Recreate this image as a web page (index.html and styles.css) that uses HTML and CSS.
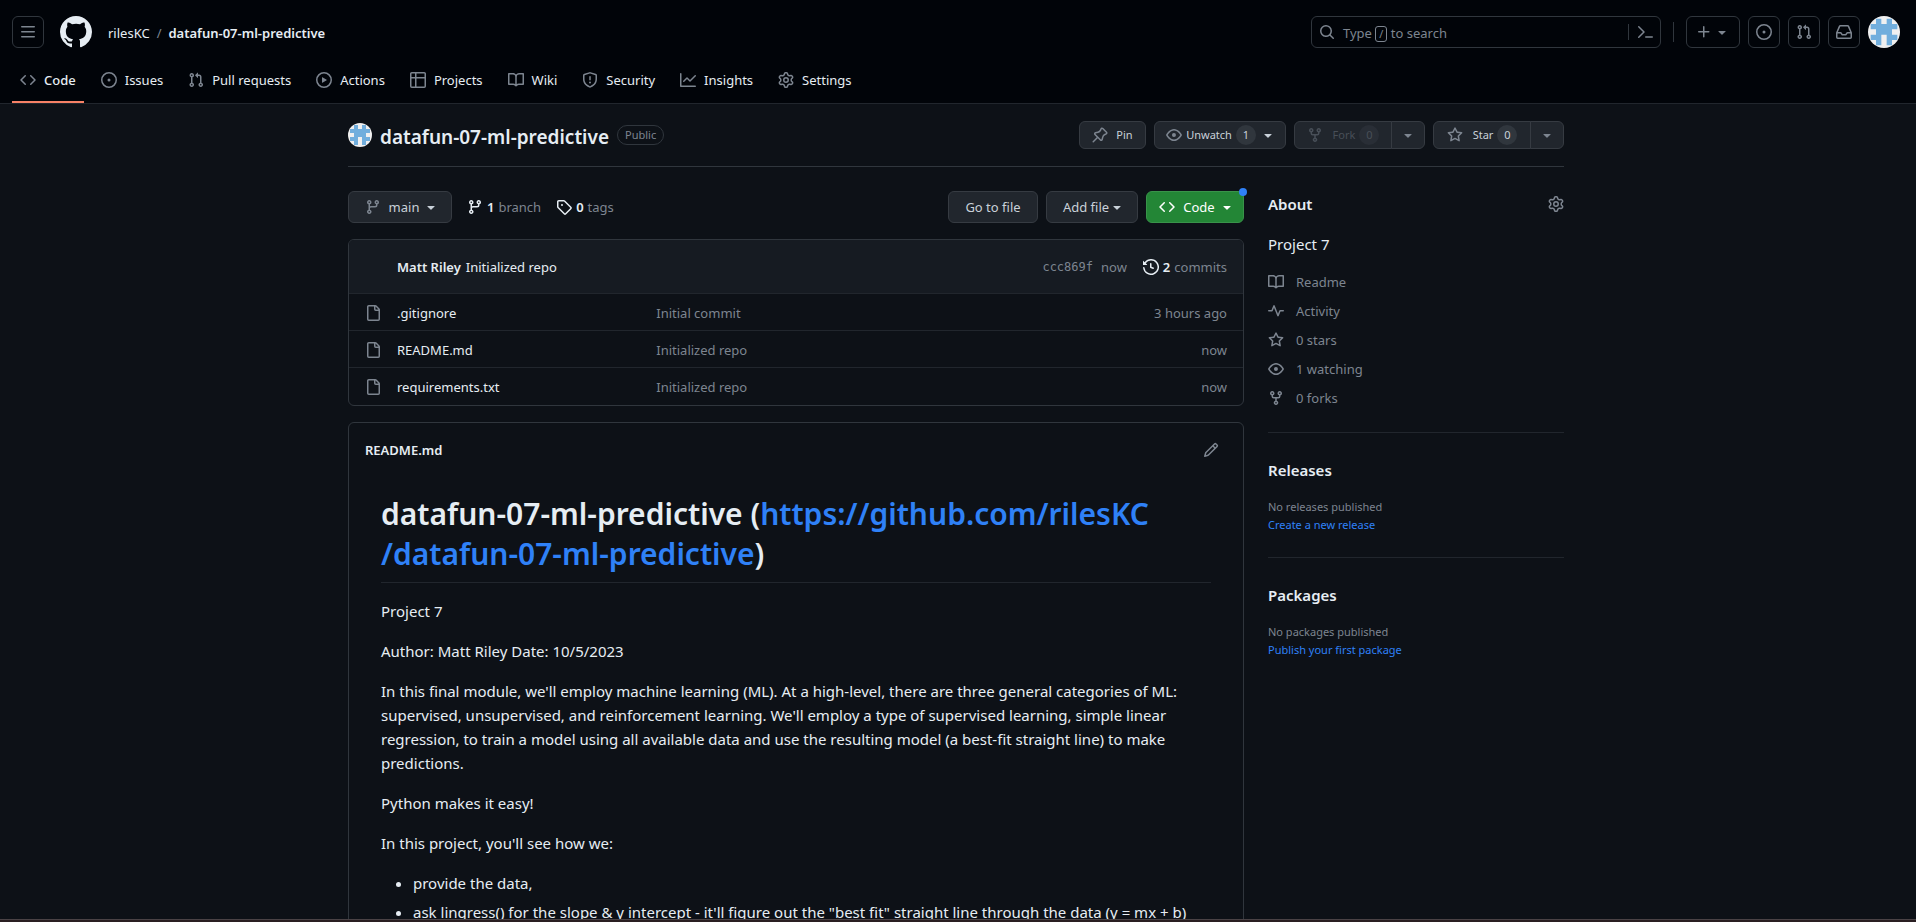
FILE: index.html
```html
<!DOCTYPE html>
<html lang="en">
<head>
<meta charset="utf-8">
<title>rilesKC/datafun-07-ml-predictive</title>
<link rel="stylesheet" href="styles.css">
</head>
<body>
<svg class="sprite" aria-hidden="true">
  <symbol id="i-menu" viewBox="0 0 16 16"><path d="M1 2.75A.75.75 0 0 1 1.75 2h12.5a.75.75 0 0 1 0 1.5H1.75A.75.75 0 0 1 1 2.75Zm0 5A.75.75 0 0 1 1.75 7h12.5a.75.75 0 0 1 0 1.5H1.75A.75.75 0 0 1 1 7.75ZM1.75 12h12.5a.75.75 0 0 1 0 1.5H1.75a.75.75 0 0 1 0-1.5Z"/></symbol>
  <symbol id="i-mark" viewBox="0 0 16 16"><path d="M8 0c4.42 0 8 3.58 8 8a8.013 8.013 0 0 1-5.45 7.59c-.4.08-.55-.17-.55-.38 0-.27.01-1.13.01-2.2 0-.75-.25-1.23-.54-1.48 1.78-.2 3.65-.88 3.65-3.95 0-.88-.31-1.59-.82-2.15.08-.2.36-1.02-.08-2.12 0 0-.67-.22-2.2.82-.64-.18-1.32-.27-2-.27-.68 0-1.36.09-2 .27-1.53-1.03-2.2-.82-2.2-.82-.44 1.1-.16 1.92-.08 2.12-.51.56-.82 1.28-.82 2.15 0 3.06 1.86 3.75 3.64 3.95-.23.2-.44.55-.51 1.07-.46.21-1.61.55-2.33-.66-.15-.24-.6-.83-1.23-.82-.67.01-.27.38.01.53.34.19.73.9.82 1.13.16.45.68 1.31 2.69.94 0 .67.01 1.3.01 1.49 0 .21-.15.45-.55.38A7.995 7.995 0 0 1 0 8c0-4.42 3.58-8 8-8Z"/></symbol>
  <symbol id="i-search" viewBox="0 0 16 16"><path d="M10.68 11.74a6 6 0 0 1-7.922-8.982 6 6 0 0 1 8.982 7.922l3.04 3.04a.749.749 0 0 1-.326 1.275.749.749 0 0 1-.734-.215ZM11.5 7a4.499 4.499 0 1 0-8.997 0A4.499 4.499 0 0 0 11.5 7Z"/></symbol>
  <symbol id="i-command" viewBox="0 0 16 16"><path d="M1.22 2.22a.75.75 0 0 1 1.06 0l5.25 5.25a.75.75 0 0 1 0 1.06l-5.25 5.25a.75.75 0 1 1-1.06-1.06L5.94 8 1.22 3.28a.75.75 0 0 1 0-1.06ZM8.75 12.25h6.5a.75.75 0 0 1 0 1.5h-6.5a.75.75 0 0 1 0-1.5Z"/></symbol>
  <symbol id="i-plus" viewBox="0 0 16 16"><path d="M7.75 2a.75.75 0 0 1 .75.75V7h4.25a.75.75 0 0 1 0 1.5H8.5v4.25a.75.75 0 0 1-1.5 0V8.5H2.75a.75.75 0 0 1 0-1.5H7V2.75A.75.75 0 0 1 7.75 2Z"/></symbol>
  <symbol id="i-caret" viewBox="0 0 16 16"><path d="m4.427 7.427 3.396 3.396a.25.25 0 0 0 .354 0l3.396-3.396A.25.25 0 0 0 11.396 7H4.604a.25.25 0 0 0-.177.427Z"/></symbol>
  <symbol id="i-issue" viewBox="0 0 16 16"><path d="M8 9.5a1.5 1.5 0 1 0 0-3 1.5 1.5 0 0 0 0 3Z"/><path d="M8 0a8 8 0 1 1 0 16A8 8 0 0 1 8 0ZM1.5 8a6.5 6.5 0 1 0 13 0 6.5 6.5 0 0 0-13 0Z"/></symbol>
  <symbol id="i-pr" viewBox="0 0 16 16"><path d="M1.5 3.25a2.25 2.25 0 1 1 3 2.122v5.256a2.251 2.251 0 1 1-1.5 0V5.372A2.25 2.25 0 0 1 1.5 3.25Zm5.677-.177L9.573.677A.25.25 0 0 1 10 .854V2.5h1A2.5 2.5 0 0 1 13.5 5v5.628a2.251 2.251 0 1 1-1.5 0V5a1 1 0 0 0-1-1h-1v1.646a.25.25 0 0 1-.427.177L7.177 3.427a.25.25 0 0 1 0-.354ZM3.75 2.5a.75.75 0 1 0 0 1.5.75.75 0 0 0 0-1.5Zm0 9.5a.75.75 0 1 0 0 1.5.75.75 0 0 0 0-1.5Zm8.25.75a.75.75 0 1 0 1.5 0 .75.75 0 0 0-1.5 0Z"/></symbol>
  <symbol id="i-inbox" viewBox="0 0 16 16"><path d="M2.8 2.06A1.75 1.75 0 0 1 4.41 1h7.18c.7 0 1.333.417 1.61 1.06l2.74 6.395c.04.093.06.194.06.295v4.5A1.75 1.75 0 0 1 14.25 15H1.75A1.75 1.75 0 0 1 0 13.25v-4.5c0-.101.02-.202.06-.295Zm1.61.44a.25.25 0 0 0-.23.152L1.887 8H4.75a.75.75 0 0 1 .6.3L6.625 10h2.75l1.275-1.7a.75.75 0 0 1 .6-.3h2.863L11.82 2.652a.25.25 0 0 0-.23-.152Zm10.09 7h-2.875l-1.275 1.7a.75.75 0 0 1-.6.3h-3.5a.75.75 0 0 1-.6-.3L4.375 9.5H1.5v3.75c0 .138.112.25.25.25h12.5a.25.25 0 0 0 .25-.25Z"/></symbol>
  <symbol id="i-code" viewBox="0 0 16 16"><path d="m11.28 3.22 4.25 4.25a.75.75 0 0 1 0 1.06l-4.25 4.25a.749.749 0 0 1-1.275-.326.749.749 0 0 1 .215-.734L13.94 8l-3.72-3.72a.749.749 0 0 1 .326-1.275.749.749 0 0 1 .734.215Zm-6.56 0a.751.751 0 0 1 1.042.018.751.751 0 0 1 .018 1.042L2.06 8l3.72 3.72a.749.749 0 0 1-.326 1.275.749.749 0 0 1-.734-.215L.47 8.53a.75.75 0 0 1 0-1.06Z"/></symbol>
  <symbol id="i-play" viewBox="0 0 16 16"><path d="M8 0a8 8 0 1 1 0 16A8 8 0 0 1 8 0ZM1.5 8a6.5 6.5 0 1 0 13 0 6.5 6.5 0 0 0-13 0Zm4.879-2.773 4.264 2.559a.25.25 0 0 1 0 .428l-4.264 2.559A.25.25 0 0 1 6 10.559V5.442a.25.25 0 0 1 .379-.215Z"/></symbol>
  <symbol id="i-table" viewBox="0 0 16 16"><path d="M0 1.75C0 .784.784 0 1.75 0h12.5C15.216 0 16 .784 16 1.75v12.5A1.75 1.75 0 0 1 14.25 16H1.75A1.75 1.75 0 0 1 0 14.25ZM6.5 6.5v8h7.75a.25.25 0 0 0 .25-.25V6.5Zm8-1.5V1.75a.25.25 0 0 0-.25-.25H6.5V5Zm-13 1.5v7.75c0 .138.112.25.25.25H5v-8ZM5 5V1.5H1.75a.25.25 0 0 0-.25.25V5Z"/></symbol>
  <symbol id="i-book" viewBox="0 0 16 16"><path d="M0 1.75A.75.75 0 0 1 .75 1h4.253c1.227 0 2.317.59 3 1.501A3.743 3.743 0 0 1 11.006 1h4.245a.75.75 0 0 1 .75.75v10.5a.75.75 0 0 1-.75.75h-4.507a2.25 2.25 0 0 0-1.591.659l-.622.621a.75.75 0 0 1-1.06 0l-.622-.621A2.25 2.25 0 0 0 5.258 13H.75a.75.75 0 0 1-.75-.75Zm7.251 10.324.004-5.073-.002-2.253A2.25 2.25 0 0 0 5.003 2.5H1.5v9h3.757a3.75 3.75 0 0 1 1.994.574ZM8.755 4.75l-.004 7.322a3.752 3.752 0 0 1 1.992-.572H14.5v-9h-3.495a2.25 2.25 0 0 0-2.25 2.25Z"/></symbol>
  <symbol id="i-shield" viewBox="0 0 16 16"><path d="M7.467.133a1.748 1.748 0 0 1 1.066 0l5.25 1.68A1.75 1.75 0 0 1 15 3.48V7c0 1.566-.32 3.182-1.303 4.682-.983 1.498-2.585 2.813-5.032 3.855a1.697 1.697 0 0 1-1.33 0c-2.447-1.042-4.049-2.357-5.032-3.855C1.32 10.182 1 8.566 1 7V3.48a1.75 1.75 0 0 1 1.217-1.667Zm.61 1.429a.25.25 0 0 0-.153 0l-5.25 1.68a.25.25 0 0 0-.174.238V7c0 1.358.275 2.666 1.057 3.86.784 1.194 2.121 2.34 4.366 3.297a.196.196 0 0 0 .154 0c2.245-.956 3.582-2.104 4.366-3.298C13.225 9.666 13.5 8.36 13.5 7V3.48a.251.251 0 0 0-.174-.237l-5.25-1.68ZM8.75 4.75v3a.75.75 0 0 1-1.5 0v-3a.75.75 0 0 1 1.5 0ZM9 10.5a1 1 0 1 1-2 0 1 1 0 0 1 2 0Z"/></symbol>
  <symbol id="i-graph" viewBox="0 0 16 16"><path d="M1.5 1.75V13.5h13.75a.75.75 0 0 1 0 1.5H.75a.75.75 0 0 1-.75-.75V1.75a.75.75 0 0 1 1.5 0Zm14.28 2.53-5.25 5.25a.75.75 0 0 1-1.06 0L7 7.06 4.28 9.78a.751.751 0 0 1-1.042-.018.751.751 0 0 1-.018-1.042l3.25-3.25a.75.75 0 0 1 1.06 0L10 7.94l4.72-4.72a.751.751 0 0 1 1.042.018.751.751 0 0 1 .018 1.042Z"/></symbol>
  <symbol id="i-gear" viewBox="0 0 16 16"><path d="M8 0a8.2 8.2 0 0 1 .701.031C9.444.095 9.99.645 10.16 1.29l.288 1.107c.018.066.079.158.212.224.231.114.454.243.668.386.123.082.233.09.299.071l1.103-.303c.644-.176 1.392.021 1.82.63.27.385.506.792.704 1.218.315.675.111 1.422-.364 1.891l-.814.806c-.049.048-.098.147-.088.294.016.257.016.515 0 .772-.01.147.038.246.088.294l.814.806c.475.469.679 1.216.364 1.891a7.977 7.977 0 0 1-.704 1.217c-.428.61-1.176.807-1.82.63l-1.102-.302c-.067-.019-.177-.011-.3.071a5.909 5.909 0 0 1-.668.386c-.133.066-.194.158-.211.224l-.29 1.106c-.168.646-.715 1.196-1.458 1.26a8.006 8.006 0 0 1-1.402 0c-.743-.064-1.289-.614-1.458-1.26l-.289-1.106c-.018-.066-.079-.158-.212-.224a5.738 5.738 0 0 1-.668-.386c-.123-.082-.233-.09-.299-.071l-1.103.303c-.644.176-1.392-.021-1.82-.63a8.12 8.12 0 0 1-.704-1.218c-.315-.675-.111-1.422.363-1.891l.815-.806c.05-.048.098-.147.088-.294a6.214 6.214 0 0 1 0-.772c.01-.147-.038-.246-.088-.294l-.815-.806C.635 6.045.431 5.298.746 4.623a7.92 7.92 0 0 1 .704-1.217c.428-.61 1.176-.807 1.82-.63l1.102.302c.067.019.177.011.3-.071.214-.143.437-.272.668-.386.133-.066.194-.158.211-.224l.29-1.106C6.009.645 6.556.095 7.299.03 7.53.01 7.764 0 8 0Zm-.571 1.525c-.036.003-.108.036-.137.146l-.289 1.105c-.147.561-.549.967-.998 1.189-.173.086-.34.183-.5.29-.417.278-.97.423-1.529.27l-1.103-.303c-.109-.03-.175.016-.195.045-.22.312-.412.644-.573.99-.014.031-.021.11.059.19l.815.806c.411.406.562.957.53 1.456a4.709 4.709 0 0 0 0 .582c.032.499-.119 1.05-.53 1.456l-.815.806c-.081.08-.073.159-.059.19.162.346.353.677.573.989.02.03.085.076.195.046l1.102-.303c.56-.153 1.113-.008 1.53.27.161.107.328.204.501.29.447.222.85.629.997 1.189l.289 1.105c.029.109.101.143.137.146a6.6 6.6 0 0 0 1.142 0c.036-.003.108-.036.137-.146l.289-1.105c.147-.561.549-.967.998-1.189.173-.086.34-.183.5-.29.417-.278.97-.423 1.529-.27l1.103.303c.109.029.175-.016.195-.045.22-.313.411-.644.573-.99.014-.031.021-.11-.059-.19l-.815-.806c-.411-.406-.562-.957-.53-1.456a4.709 4.709 0 0 0 0-.582c-.032-.499.119-1.05.53-1.456l.815-.806c.081-.08.073-.159.059-.19a6.464 6.464 0 0 0-.573-.989c-.02-.03-.085-.076-.195-.046l-1.102.303c-.56.153-1.113.008-1.53-.27a4.44 4.44 0 0 0-.501-.29c-.447-.222-.85-.629-.997-1.189l-.289-1.105c-.029-.11-.101-.143-.137-.146a6.6 6.6 0 0 0-1.142 0ZM11 8a3 3 0 1 1-6 0 3 3 0 0 1 6 0ZM9.5 8a1.5 1.5 0 1 0-3.001.001A1.5 1.5 0 0 0 9.5 8Z"/></symbol>
  <symbol id="i-pin" viewBox="0 0 16 16"><path d="m11.294.984 3.722 3.722a1.75 1.75 0 0 1-.504 2.826l-1.327.613a3.089 3.089 0 0 0-1.707 2.084l-.584 2.454c-.317 1.332-1.972 1.8-2.94.832L5.75 11.311 1.78 15.28a.749.749 0 1 1-1.06-1.06l3.969-3.97-2.204-2.204c-.968-.968-.5-2.623.832-2.94l2.454-.584a3.08 3.08 0 0 0 2.084-1.707l.613-1.327a1.75 1.75 0 0 1 2.826-.504ZM6.283 9.723l2.732 2.731a.25.25 0 0 0 .42-.119l.584-2.454a4.586 4.586 0 0 1 2.537-3.098l1.328-.613a.25.25 0 0 0 .072-.404l-3.722-3.722a.25.25 0 0 0-.404.072l-.613 1.328a4.584 4.584 0 0 1-3.098 2.537l-2.454.584a.25.25 0 0 0-.119.42l2.731 2.732Z"/></symbol>
  <symbol id="i-eye" viewBox="0 0 16 16"><path d="M8 2c1.981 0 3.671.992 4.933 2.078 1.27 1.091 2.187 2.345 2.637 3.023a1.62 1.62 0 0 1 0 1.798c-.45.678-1.367 1.932-2.637 3.023C11.67 13.008 9.981 14 8 14c-1.981 0-3.671-.992-4.933-2.078C1.797 10.83.88 9.576.43 8.898a1.62 1.62 0 0 1 0-1.798c.45-.677 1.367-1.931 2.637-3.022C4.33 2.992 6.019 2 8 2ZM1.679 7.932a.12.12 0 0 0 0 .136c.411.622 1.241 1.75 2.366 2.717C5.176 11.758 6.527 12.5 8 12.5c1.473 0 2.825-.742 3.955-1.715 1.124-.967 1.954-2.096 2.366-2.717a.12.12 0 0 0 0-.136c-.412-.621-1.242-1.75-2.366-2.717C10.824 4.242 9.473 3.5 8 3.5c-1.473 0-2.825.742-3.955 1.715-1.124.967-1.954 2.096-2.366 2.717ZM8 10a2 2 0 1 1-.001-3.999A2 2 0 0 1 8 10Z"/></symbol>
  <symbol id="i-fork" viewBox="0 0 16 16"><path d="M5 5.372v.878c0 .414.336.75.75.75h4.5a.75.75 0 0 0 .75-.75v-.878a2.25 2.25 0 1 1 1.5 0v.878a2.25 2.25 0 0 1-2.25 2.25h-1.5v2.128a2.251 2.251 0 1 1-1.5 0V8.5h-1.5A2.25 2.25 0 0 1 3.5 6.25v-.878a2.25 2.25 0 1 1 1.5 0ZM5 3.25a.75.75 0 1 0-1.5 0 .75.75 0 0 0 1.5 0Zm6.75.75a.75.75 0 1 0 0-1.5.75.75 0 0 0 0 1.5Zm-3 8.75a.75.75 0 1 0-1.5 0 .75.75 0 0 0 1.5 0Z"/></symbol>
  <symbol id="i-star" viewBox="0 0 16 16"><path d="M8 .25a.75.75 0 0 1 .673.418l1.882 3.815 4.21.612a.75.75 0 0 1 .416 1.279l-3.046 2.97.719 4.192a.751.751 0 0 1-1.088.791L8 12.347l-3.766 1.98a.75.75 0 0 1-1.088-.79l.72-4.194L.818 6.374a.75.75 0 0 1 .416-1.28l4.21-.611L7.327.668A.75.75 0 0 1 8 .25Zm0 2.445L6.615 5.5a.75.75 0 0 1-.564.41l-3.097.45 2.24 2.184a.75.75 0 0 1 .216.664l-.528 3.084 2.769-1.456a.75.75 0 0 1 .698 0l2.77 1.456-.53-3.084a.75.75 0 0 1 .216-.664l2.24-2.183-3.096-.45a.75.75 0 0 1-.564-.41L8 2.694Z"/></symbol>
  <symbol id="i-branch" viewBox="0 0 16 16"><path d="M9.5 3.25a2.25 2.25 0 1 1 3 2.122V6A2.5 2.5 0 0 1 10 8.5H6a1 1 0 0 0-1 1v1.128a2.251 2.251 0 1 1-1.5 0V5.372a2.25 2.25 0 1 1 1.5 0v1.836A2.493 2.493 0 0 1 6 7h4a1 1 0 0 0 1-1v-.628A2.25 2.25 0 0 1 9.5 3.25Zm-6 0a.75.75 0 1 0 1.5 0 .75.75 0 0 0-1.5 0Zm8.25-.75a.75.75 0 1 0 0 1.5.75.75 0 0 0 0-1.5ZM4.25 12a.75.75 0 1 0 0 1.5.75.75 0 0 0 0-1.5Z"/></symbol>
  <symbol id="i-tag" viewBox="0 0 16 16"><path d="M1 7.775V2.75C1 1.784 1.784 1 2.75 1h5.025c.464 0 .91.184 1.238.513l6.25 6.25a1.75 1.75 0 0 1 0 2.474l-5.026 5.026a1.75 1.75 0 0 1-2.474 0l-6.25-6.25A1.752 1.752 0 0 1 1 7.775Zm1.5 0c0 .066.026.13.073.177l6.25 6.25a.25.25 0 0 0 .354 0l5.025-5.025a.25.25 0 0 0 0-.354l-6.25-6.25a.25.25 0 0 0-.177-.073H2.75a.25.25 0 0 0-.25.25ZM6 5a1 1 0 1 1 0 2 1 1 0 0 1 0-2Z"/></symbol>
  <symbol id="i-history" viewBox="0 0 16 16"><path d="m.427 1.927 1.215 1.215a8.002 8.002 0 1 1-1.6 5.685.75.75 0 1 1 1.493-.154 6.5 6.5 0 1 0 1.18-4.458l1.358 1.358A.25.25 0 0 1 3.896 6H.25A.25.25 0 0 1 0 5.75V2.104a.25.25 0 0 1 .427-.177ZM7.75 4a.75.75 0 0 1 .75.75v2.992l2.028.812a.75.75 0 0 1-.557 1.392l-2.5-1A.751.751 0 0 1 7 8.25v-3.5A.75.75 0 0 1 7.75 4Z"/></symbol>
  <symbol id="i-file" viewBox="0 0 16 16"><path d="M2 1.75C2 .784 2.784 0 3.75 0h6.586c.464 0 .909.184 1.237.513l2.914 2.914c.329.328.513.773.513 1.237v9.586A1.75 1.75 0 0 1 13.25 16h-9.5A1.75 1.75 0 0 1 2 14.25Zm1.75-.25a.25.25 0 0 0-.25.25v12.5c0 .138.112.25.25.25h9.5a.25.25 0 0 0 .25-.25V6h-2.75A1.75 1.75 0 0 1 9 4.25V1.5Zm6.75.062V4.25c0 .138.112.25.25.25h2.688l-.011-.013-2.914-2.914-.013-.011Z"/></symbol>
  <symbol id="i-pencil" viewBox="0 0 16 16"><path d="M11.013 1.427a1.75 1.75 0 0 1 2.474 0l1.086 1.086a1.75 1.75 0 0 1 0 2.474l-8.61 8.61c-.21.21-.47.364-.756.445l-3.251.93a.75.75 0 0 1-.927-.928l.929-3.25c.081-.286.235-.547.445-.758l8.61-8.61Zm.176 4.823L9.75 4.81l-6.286 6.287a.253.253 0 0 0-.064.108l-.558 1.953 1.953-.558a.253.253 0 0 0 .108-.064Zm1.238-3.763a.25.25 0 0 0-.354 0L10.811 3.75l1.439 1.44 1.263-1.263a.25.25 0 0 0 0-.354Z"/></symbol>
  <symbol id="i-pulse" viewBox="0 0 16 16"><path d="M6 2c.306 0 .582.187.696.471L10 10.731l1.304-3.26A.751.751 0 0 1 12 7h3.25a.75.75 0 0 1 0 1.5h-2.742l-1.812 4.528a.751.751 0 0 1-1.392 0L6 4.77 4.696 8.03A.75.75 0 0 1 4 8.5H.75a.75.75 0 0 1 0-1.5h2.742l1.812-4.529A.751.751 0 0 1 6 2Z"/></symbol>
  <symbol id="i-identicon" viewBox="0 0 12 12"><path fill="#f0f0f0" d="M0 0h12v12H0z"/><path fill="#71aedd" d="M3 1h2v2h2V1h2v2h2v2H9v2h2v2H9v2H7V7H5v4H3V9H1V7h2V5H1V3h2z"/></symbol>
</svg>

<div class="screen">
  <header class="topbar">
    <div class="topbar-row">
      <button class="square" aria-label="Open menu"><svg class="icon"><use href="#i-menu"/></svg></button>
      <a class="mark" href="#" aria-label="Homepage"><svg class="mark-icon"><use href="#i-mark"/></svg></a>
      <nav class="crumbs" aria-label="Breadcrumb">
        <a href="#">rilesKC</a><span class="slash">/</span><a class="strong" href="#">datafun-07-ml-predictive</a>
      </nav>
      <div class="tools">
        <div class="search">
          <svg class="icon"><use href="#i-search"/></svg>
          <span class="hint">Type <kbd>/</kbd> to search</span>
          <input class="search-input" type="text" aria-label="Search">
          <button class="palette" aria-label="Command palette"><svg class="icon"><use href="#i-command"/></svg></button>
        </div>
        <span class="rule"></span>
        <button class="square create" aria-label="Create new"><svg class="icon"><use href="#i-plus"/></svg><svg class="icon"><use href="#i-caret"/></svg></button>
        <button class="square" aria-label="Issues"><svg class="icon"><use href="#i-issue"/></svg></button>
        <button class="square" aria-label="Pull requests"><svg class="icon"><use href="#i-pr"/></svg></button>
        <button class="square" aria-label="Notifications"><svg class="icon"><use href="#i-inbox"/></svg></button>
        <button class="profile" aria-label="Profile"><svg class="avatar avatar-large"><use href="#i-identicon"/></svg></button>
      </div>
    </div>
    <nav class="tabs" aria-label="Repository">
      <a class="tab current" href="#"><svg class="icon"><use href="#i-code"/></svg>Code</a>
      <a class="tab" href="#"><svg class="icon"><use href="#i-issue"/></svg>Issues</a>
      <a class="tab" href="#"><svg class="icon"><use href="#i-pr"/></svg>Pull requests</a>
      <a class="tab" href="#"><svg class="icon"><use href="#i-play"/></svg>Actions</a>
      <a class="tab" href="#"><svg class="icon"><use href="#i-table"/></svg>Projects</a>
      <a class="tab" href="#"><svg class="icon"><use href="#i-book"/></svg>Wiki</a>
      <a class="tab" href="#"><svg class="icon"><use href="#i-shield"/></svg>Security</a>
      <a class="tab" href="#"><svg class="icon"><use href="#i-graph"/></svg>Insights</a>
      <a class="tab" href="#"><svg class="icon"><use href="#i-gear"/></svg>Settings</a>
    </nav>
  </header>

  <main class="page">
    <div class="container">
      <div class="repo-head">
        <svg class="avatar"><use href="#i-identicon"/></svg>
        <h1 class="repo-name"><a href="#">datafun-07-ml-predictive</a></h1>
        <span class="pill">Public</span>
        <div class="repo-actions">
          <button class="btn small pin"><svg class="icon"><use href="#i-pin"/></svg>Pin</button>
          <button class="btn small watch"><svg class="icon"><use href="#i-eye"/></svg>Unwatch<span class="count">1</span><svg class="icon caret"><use href="#i-caret"/></svg></button>
          <div class="split">
            <button class="btn small main-part" disabled><svg class="icon"><use href="#i-fork"/></svg>Fork<span class="count">0</span></button>
            <button class="btn small drop" aria-label="Existing forks"><svg class="icon"><use href="#i-caret"/></svg></button>
          </div>
          <div class="split">
            <button class="btn small main-part"><svg class="icon"><use href="#i-star"/></svg>Star<span class="count">0</span></button>
            <button class="btn small drop" aria-label="Add to list"><svg class="icon"><use href="#i-caret"/></svg></button>
          </div>
        </div>
      </div>

      <div class="columns">
        <div class="primary">
          <div class="file-nav">
            <button class="btn branch-btn"><svg class="icon"><use href="#i-branch"/></svg>main<svg class="icon caret"><use href="#i-caret"/></svg></button>
            <a class="stat" href="#"><svg class="icon"><use href="#i-branch"/></svg><strong>1</strong><span>branch</span></a>
            <a class="stat" href="#"><svg class="icon"><use href="#i-tag"/></svg><strong>0</strong><span>tags</span></a>
            <div class="file-actions">
              <a class="btn" href="#">Go to file</a>
              <button class="btn add-btn">Add file<svg class="icon caret"><use href="#i-caret"/></svg></button>
              <button class="btn green"><svg class="icon"><use href="#i-code"/></svg>Code<svg class="icon caret"><use href="#i-caret"/></svg><span class="dot"></span></button>
            </div>
          </div>

          <section class="box files">
            <div class="commit">
              <a class="strong" href="#">Matt Riley</a>
              <a href="#">Initialized repo</a>
              <div class="commit-meta">
                <a class="sha" href="#">ccc869f</a>
                <a class="muted" href="#">now</a>
                <a class="commits" href="#"><svg class="icon"><use href="#i-history"/></svg><strong>2</strong><span class="muted">commits</span></a>
              </div>
            </div>
            <table class="file-table">
              <tr><td class="f-icon"><svg class="icon"><use href="#i-file"/></svg></td><td class="f-name"><a href="#">.gitignore</a></td><td class="f-msg"><a href="#">Initial commit</a></td><td class="f-age">3 hours ago</td></tr>
              <tr><td class="f-icon"><svg class="icon"><use href="#i-file"/></svg></td><td class="f-name"><a href="#">README.md</a></td><td class="f-msg"><a href="#">Initialized repo</a></td><td class="f-age">now</td></tr>
              <tr><td class="f-icon"><svg class="icon"><use href="#i-file"/></svg></td><td class="f-name"><a href="#">requirements.txt</a></td><td class="f-msg"><a href="#">Initialized repo</a></td><td class="f-age">now</td></tr>
            </table>
          </section>

          <section class="box readme">
            <div class="readme-head">
              <h2 class="readme-title">README.md</h2>
              <button class="plain" aria-label="Edit this file"><svg class="icon"><use href="#i-pencil"/></svg></button>
            </div>
            <article class="prose">
              <h1>datafun-07-ml-predictive (<a href="#">https://github.com/rilesKC<wbr>/datafun-07-ml-predictive</a>)</h1>
              <p>Project 7</p>
              <p>Author: Matt Riley Date: 10/5/2023</p>
              <p>In this final module, we'll employ machine learning (ML). At a high-level, there are three general categories of ML: supervised, unsupervised, and reinforcement learning. We'll employ a type of supervised learning, simple linear regression, to train a model using all available data and use the resulting model (a best-fit straight line) to make predictions.</p>
              <p>Python makes it easy!</p>
              <p>In this project, you'll see how we:</p>
              <ul>
                <li>provide the data,</li>
                <li>ask lingress() for the slope &amp; y intercept - it'll figure out the "best fit" straight line through the data (y = mx + b)</li>
              </ul>
            </article>
          </section>
        </div>

        <aside class="sidebar">
          <section class="panel">
            <div class="panel-head">
              <h2>About</h2>
              <button class="plain" aria-label="Edit repository details"><svg class="icon"><use href="#i-gear"/></svg></button>
            </div>
            <p class="description">Project 7</p>
            <ul class="facts">
              <li><a href="#"><svg class="icon"><use href="#i-book"/></svg>Readme</a></li>
              <li><a href="#"><svg class="icon"><use href="#i-pulse"/></svg>Activity</a></li>
              <li><a href="#"><svg class="icon"><use href="#i-star"/></svg>0 stars</a></li>
              <li><a href="#"><svg class="icon"><use href="#i-eye"/></svg>1 watching</a></li>
              <li><a href="#"><svg class="icon"><use href="#i-fork"/></svg>0 forks</a></li>
            </ul>
          </section>
          <section class="panel">
            <h2>Releases</h2>
            <p class="note">No releases published</p>
            <a class="note-link" href="#">Create a new release</a>
          </section>
          <section class="panel">
            <h2>Packages</h2>
            <p class="note">No packages published</p>
            <a class="note-link" href="#">Publish your first package</a>
          </section>
        </aside>
      </div>
    </div>
  </main>
  <div class="edge"></div>
</div>
</body>
</html>
```
FILE: styles.css
```css
:root {
  --text: #e6edf3;
  --muted: #7d8590;
  --border: #30363d;
  --border-soft: #21262d;
  --link: #2f81f7;
  --btn: #21262d;
}

* { box-sizing: border-box; }

body {
  margin: 0;
  background: #0d1117;
  color: var(--text);
  font-family: "Noto Sans", "Open Sans", sans-serif;
  font-size: 13px;
  line-height: 20px;
}

a { color: inherit; text-decoration: none; }
h1, h2, p, ul { margin: 0; padding: 0; }
button, input { font: inherit; color: inherit; }
strong, .strong { font-weight: 600; }
.muted { color: var(--muted); }
.sprite { display: none; }

.icon {
  width: 16px;
  height: 16px;
  flex: none;
  display: block;
  fill: currentColor;
}

.avatar {
  width: 24px;
  height: 24px;
  flex: none;
  display: block;
  border-radius: 50%;
}
.avatar-large { width: 32px; height: 32px; }

.screen {
  display: flex;
  flex-direction: column;
  height: 100vh;
}

/* Top bar */
.topbar {
  flex: none;
  background: #010409;
  border-bottom: 1px solid var(--border-soft);
  padding: 16px 16px 0 12px;
}
.topbar-row { display: flex; align-items: center; }

.square {
  display: flex;
  align-items: center;
  justify-content: center;
  width: 32px;
  height: 32px;
  padding: 0;
  background: transparent;
  border: 1px solid var(--border);
  border-radius: 6px;
  color: var(--muted);
}
.square.create { width: 54px; gap: 2px; }

.mark { margin: 0 16px; color: var(--text); }
.mark-icon { display: block; width: 32px; height: 32px; fill: currentColor; }

.crumbs { display: flex; gap: 7px; padding-top: 2px; }
.slash { color: var(--muted); }

.tools {
  display: flex;
  align-items: center;
  gap: 8px;
  margin-left: auto;
}

.search {
  position: relative;
  display: flex;
  align-items: center;
  gap: 8px;
  width: 350px;
  height: 32px;
  padding: 0 7px;
  border: 1px solid var(--border);
  border-radius: 6px;
  color: var(--muted);
}
.search-input {
  position: absolute;
  inset: 0;
  width: 100%;
  background: transparent;
  border: 0;
  padding: 0 40px 0 32px;
  outline: 0;
}
.hint { padding-top: 2px; }
.hint kbd {
  display: inline-block;
  font: inherit;
  font-size: 11px;
  line-height: 14px;
  padding: 0 3px;
  border: 1px solid var(--muted);
  border-radius: 3px;
}
.palette {
  position: relative;
  display: block;
  margin-left: auto;
  padding: 0 0 0 8px;
  background: transparent;
  border: 0;
  border-left: 1px solid var(--border);
  color: var(--muted);
}
.rule { width: 1px; height: 20px; margin: 0 4px; background: var(--border); }
.profile { padding: 0; border: 0; background: transparent; }

.tabs { display: flex; gap: 9px; margin-top: 16px; }
.tab {
  display: flex;
  align-items: center;
  gap: 8px;
  height: 39px;
  padding: 0 8px 7px;
}
.tab .icon { color: var(--muted); }
.tab.current {
  font-weight: 500;
  border-bottom: 2px solid #f78166;
  padding-bottom: 5px;
}

/* Page */
.page { flex: 1; min-height: 0; overflow: hidden; }
.container {
  max-width: 1280px;
  margin: 0 auto;
  padding: 0 34px 0 30px;
}

.repo-head {
  display: flex;
  align-items: center;
  height: 63px;
  border-bottom: 1px solid var(--border);
}
.repo-name {
  margin: 0 8px;
  padding-top: 3px;
  font-size: 19px;
  font-weight: 600;
  line-height: 32px;
}
.pill {
  padding: 0 7px;
  border: 1px solid var(--border);
  border-radius: 10px;
  color: var(--muted);
  font-size: 11px;
  line-height: 18px;
}
.repo-actions { display: flex; gap: 8px; margin-left: auto; }

.btn {
  display: inline-flex;
  align-items: center;
  justify-content: center;
  gap: 8px;
  height: 32px;
  padding: 0 15px;
  background: var(--btn);
  border: 1px solid #363b42;
  border-radius: 6px;
  color: #c9d1d9;
  white-space: nowrap;
}
.btn .icon { color: var(--muted); }
.btn .caret { color: inherit; margin: 0 -4px; }
.btn.small { height: 28px; padding: 0 12px; font-size: 11px; }
.btn.pin { width: 67px; }
.btn.watch { width: 132px; gap: 4px; }
.btn.watch .caret { margin: 0 -2px 0 0; }

.count {
  min-width: 20px;
  padding: 0 6px;
  border-radius: 10px;
  background: #30363d;
  text-align: center;
}
.split { display: flex; }
.btn.main-part { width: 98px; border-radius: 6px 0 0 6px; gap: 4px; }
.btn.main-part .icon { margin-right: 6px; }
.btn.drop {
  width: 34px;
  padding: 0;
  margin-left: -1px;
  border-radius: 0 6px 6px 0;
}
.btn:disabled, .btn:disabled .icon { color: #484f58; }
.btn:disabled .count { background: #292e36; }

.columns {
  display: grid;
  grid-template-columns: minmax(0, 1fr) 296px;
  gap: 24px;
  padding-top: 24px;
}

.file-nav { display: flex; align-items: center; gap: 15px; }
.branch-btn { width: 104px; }
.stat { display: flex; align-items: center; gap: 4px; }
.stat span { color: var(--muted); }
.file-actions { display: flex; gap: 8px; margin-left: auto; }
.file-actions .btn { min-width: 90px; padding: 0 15px; }
.file-actions .add-btn { gap: 4px; min-width: 92px; }
.file-actions .green {
  position: relative;
  min-width: 98px;
  padding: 0 11px;
  background: #238636;
  border-color: #39934a;
  color: #ffffff;
}
.green .icon { color: inherit; }
.dot {
  position: absolute;
  top: -4px;
  right: -4px;
  width: 8px;
  height: 8px;
  border-radius: 50%;
  background: var(--link);
}

.box {
  margin-top: 16px;
  border: 1px solid var(--border);
  border-radius: 6px;
  overflow: hidden;
}

.commit {
  display: flex;
  align-items: center;
  gap: 5px;
  height: 53px;
  padding: 0 16px 0 48px;
  background: #161b22;
}
.commit-meta { display: flex; align-items: center; gap: 8px; margin-left: auto; }
.sha {
  color: var(--muted);
  font-family: "DejaVu Sans Mono", monospace;
  font-size: 12px;
}
.commits { display: flex; align-items: center; gap: 4px; margin-left: 8px; }

.file-table { width: 100%; border-collapse: collapse; table-layout: fixed; }
.file-table td {
  height: 37px;
  padding: 2px 0 0;
  border-top: 1px solid var(--border-soft);
  vertical-align: middle;
}
.f-icon { width: 48px; color: var(--muted); }
.f-icon .icon { margin-left: 16px; }
.f-name { width: 29%; }
.f-msg, .file-table .f-age { color: var(--muted); }
.file-table .f-age { width: 120px; padding-right: 16px; text-align: right; }

.readme-head {
  display: flex;
  align-items: center;
  justify-content: space-between;
  padding: 15px 24px 0 16px;
}
.readme-title { font-size: 13px; font-weight: 600; line-height: 24px; }
.plain { padding: 0; border: 0; background: transparent; color: var(--muted); }

.prose {
  padding: 32px 32px 32px;
  font-size: 15px;
  line-height: 24px;
}
.prose h1 {
  margin-bottom: 16px;
  padding-bottom: 8px;
  border-bottom: 1px solid var(--border-soft);
  font-size: 30px;
  font-weight: 600;
  line-height: 40px;
}
.prose h1 a { color: var(--link); }
.prose p { margin-bottom: 16px; }
.prose ul { padding-left: 32px; }
.prose li + li { margin-top: 5px; }

/* Sidebar */
.panel { padding-bottom: 24px; }
.panel + .panel { border-top: 1px solid var(--border-soft); padding: 24px 0 23px; }
.panel h2 { font-size: 15px; font-weight: 600; line-height: 26px; }
.panel + .panel h2 { margin-bottom: 15px; }
.panel-head { display: flex; align-items: center; justify-content: space-between; }
.description { margin-top: 15px; font-size: 15px; line-height: 24px; }
.facts { list-style: none; margin-top: 16px; color: var(--muted); }
.facts li + li { margin-top: 9px; }
.facts a { display: flex; align-items: center; gap: 12px; }
.note, .note-link { display: block; font-size: 11px; line-height: 18px; }
.note { color: var(--muted); }
.note-link { color: var(--link); }

.edge {
  flex: none;
  height: 3px;
  background: #2a1f22;
  border-top: 1px solid #4a4245;
}
```
